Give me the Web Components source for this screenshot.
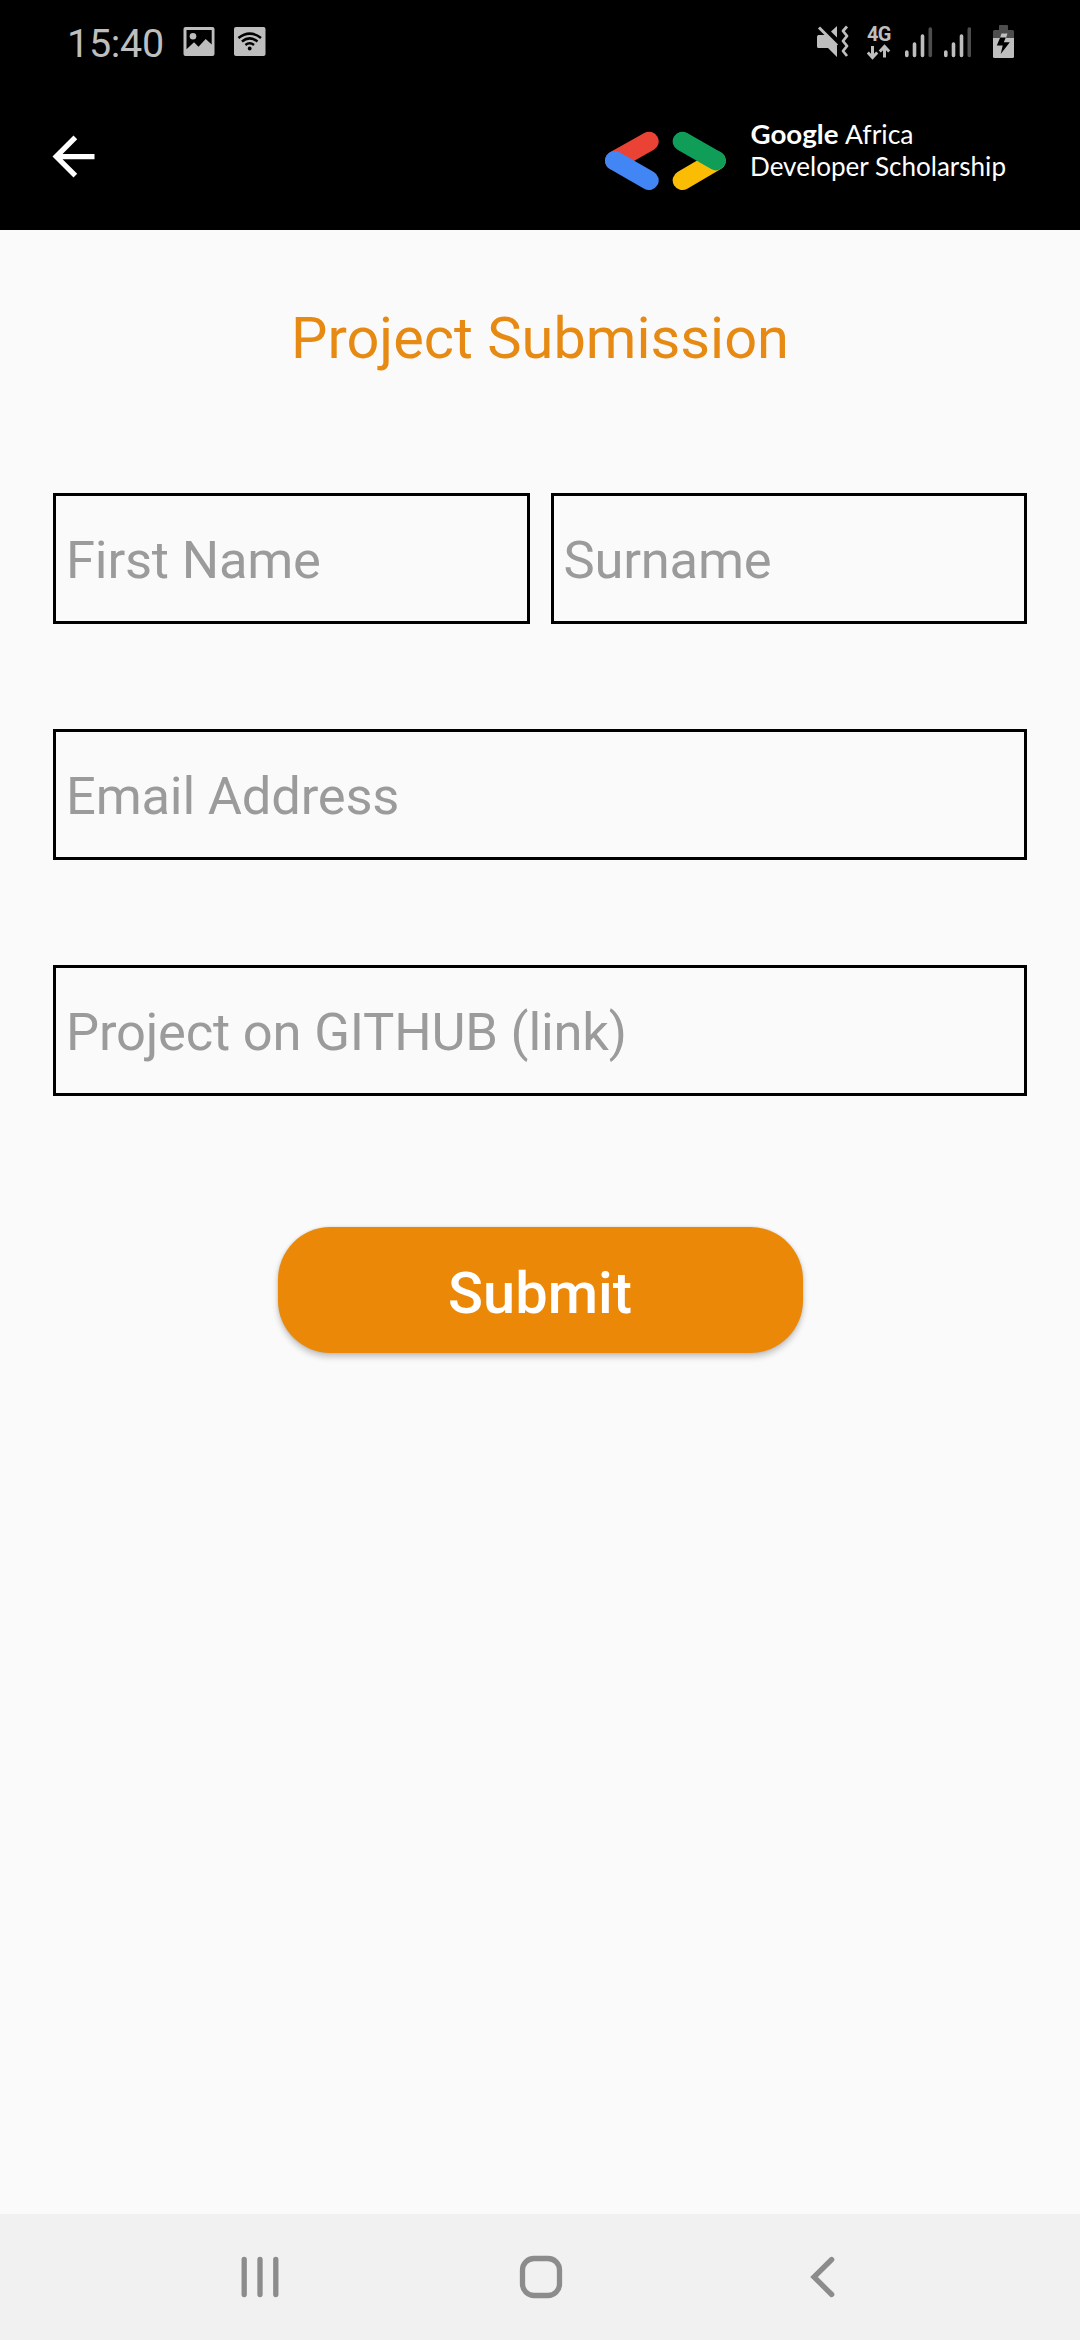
<!DOCTYPE html>
<html lang="en">
<head>
<meta charset="utf-8">
<title>Project Submission</title>
<style>
html,body{margin:0;padding:0;background:#fafafa}
body{font-family:Roboto,"Liberation Sans",sans-serif}
</style>
</head>
<body>
<submission-screen></submission-screen>
<script>
const define = (name, css, html) => customElements.define(name, class extends HTMLElement {
  constructor() {
    super();
    this.attachShadow({ mode: 'open' }).innerHTML =
      `<style>:host{display:block;box-sizing:border-box}*{box-sizing:border-box}svg{display:block;flex:none}${css}</style>${html}`;
  }
});

define('status-bar', `
:host{display:flex;justify-content:space-between;height:84px;padding:0 64px 0 67px;color:#bebebe;background:#000}
.left,.right{display:flex;align-items:flex-start}
.time{font-size:39.5px;line-height:46px;padding-top:21px;width:116px;white-space:nowrap;letter-spacing:-.3px}
.left svg{margin-top:27px}
.right svg{margin-top:24px}
.wifi{margin-left:18.5px}
.net{width:24px;margin-left:18px;padding-top:24px}
.net span{display:block;font-weight:700;font-size:20px;line-height:20px;letter-spacing:-.6px;white-space:nowrap}
.net svg{margin-top:0}
`, `
<div class="left">
  <span class="time">15:40</span>
  <svg width="32" height="29" viewBox="0 0 32 29"><path fill="#bebebe" fill-rule="evenodd" d="M2.500 0h27a2 2 0 0 1 2 2v25a2 2 0 0 1-2 2h-27a2 2 0 0 1-2-2V2a2 2 0 0 1 2-2zM3.500 3v19.200l7.500-7 4.500 4.600 7.200-7.800 6 5.500V3z"/><circle cx="10" cy="9.200" r="3.300" fill="#bebebe"/></svg>
  <svg class="wifi" width="32" height="29" viewBox="0 0 32 29"><rect width="31.500" height="29" rx="2" fill="#bebebe"/><g fill="none" stroke="#000" stroke-width="2.500"><path d="M4.400 11Q15.700 2.200 27 11"/><path d="M7.900 14.500Q15.700 8.300 23.500 14.500"/><path d="M11.400 18Q15.700 14.500 20 18"/></g><circle cx="15.700" cy="21.500" r="1.900" fill="#000"/></svg>
</div>
<div class="right">
  <svg width="32" height="36" viewBox="817 24 32 36"><path fill="#bebebe" d="M818 35h8l11 11v11l-9-9h-9.500a1.500 1.500 0 0 1-1.500-1.500V36.500zM831 31.500l6-5.500v11.500z"/><path d="M819 27.500L837 45.500" stroke="#bebebe" stroke-width="3"/><path d="M847 26.500l-4 4.500 4 5-4 5 4 5-4 5 4 5" fill="none" stroke="#bebebe" stroke-width="2.800" stroke-linejoin="round"/></svg>
  <div class="net"><span>4G</span><svg width="24" height="16" viewBox="867 44 24 16"><path d="M872.500 46v11.500m-4.700-5l4.700 5 4.700-5M884.500 57.500V46.500m-4.700 5l4.700-5 4.700 5" fill="none" stroke="#bebebe" stroke-width="3"/></svg></div>
  <svg width="66" height="36" viewBox="905 24 66 36" style="margin-left:14px"><g stroke="#bebebe" stroke-width="3.600" stroke-linecap="round"><path d="M906.800 52v3.500M914.500 44v11.500M922.500 36v19.500M945.800 52v3.500M953.500 44v11.500M961.500 36v19.500"/><path stroke="#4d4d4d" d="M930.300 29v26.500M969.300 29v26.500"/></g></svg>
  <svg width="24" height="36" viewBox="992 24 24 36" style="margin-left:21px"><path fill="#4d4d4d" d="M1000 25h7a1 1 0 0 1 1 1v4h4.500a1.500 1.500 0 0 1 1.500 1.500V38h-21v-6.500a1.500 1.500 0 0 1 1.500-1.500h4.500v-4a1 1 0 0 1 1-1z"/><path fill="#bebebe" d="M993 38h21v18.500a1.500 1.500 0 0 1-1.500 1.500h-18a1.500 1.500 0 0 1-1.500-1.500z"/><path fill="#bebebe" d="M1001.500 33.500h6L1006 38h-6z"/><path fill="#000" d="M1000.200 37.500h5.600l-2 4.800h6L1000.700 54l2-8.400h-5.900z"/></svg>
</div>`);

define('scholarship-logo', `
:host{display:flex;align-items:flex-start}
`, `
<svg width="122" height="60" viewBox="604 131 122 60"><g fill="none" stroke-width="19.400" stroke-linecap="round"><path stroke="#ea4335" d="M614.700 160.700L649 141.400"/><path stroke="#4285f4" d="M614.700 160.700L649 180.300"/><path stroke="#fbbc04" d="M682.400 180.300L716 160.700"/><path stroke="#0f9d58" d="M682.400 141.400L716 160.700"/></g></svg>
<svg width="262" height="84" viewBox="748 106 262 84" style="margin:-25px 0 0 22px"><g fill="#fff" font-family="Lato, Roboto, sans-serif" font-size="26.500"><text x="750.500" y="144" font-weight="700" textLength="88" lengthAdjust="spacingAndGlyphs">Google</text><text x="845" y="144" textLength="68.500" lengthAdjust="spacingAndGlyphs">Africa</text><text x="750" y="176" textLength="256" lengthAdjust="spacingAndGlyphs">Developer Scholarship</text></g></svg>`);

define('app-bar', `
:host{display:flex;justify-content:space-between;align-items:flex-start;height:146px;padding:41px 70px 0 42px;background:#000}
scholarship-logo{margin-top:6px}
`, `
<svg width="63" height="63" viewBox="0 0 24 24"><path fill="#fff" d="M20 11H7.830l5.590-5.590L12 4l-8 8 8 8 1.410-1.410L7.830 13H20v-2z"/></svg>
<scholarship-logo></scholarship-logo>`);

define('text-field', `
:host{display:flex;align-items:center;height:131px;flex:1;border:3px solid #000;padding:3px 10px 0;font-size:52.5px;line-height:62px;letter-spacing:-.2px;color:#9b9b9b;white-space:nowrap}
`, `<slot></slot>`);

define('submit-button', `
:host{display:flex;align-items:center;justify-content:center;width:525px;height:126px;padding-top:5px;border-radius:52.5px;background:#ec8807;color:#fff;font-weight:500;font-size:57.75px;line-height:68px;box-shadow:0 4px 6px rgba(0,0,0,.22),0 0 3px rgba(0,0,0,.12)}
`, `<slot></slot>`);

define('nav-bar', `
:host{display:flex;align-items:center;justify-content:space-between;height:126px;padding:0 242px 0 238px;background:#f1f1f1}
svg{fill:none;stroke:#8c8c8c;stroke-width:5.3;stroke-linecap:round}
.home{margin-right:8px}
`, `
<svg width="44" height="44" viewBox="238 2255 44 44"><path d="M244.200 2259.500v35M260 2259.500v35M275.800 2259.500v35"/></svg>
<svg class="home" width="44" height="44" viewBox="519 2255 44 44"><rect x="522.500" y="2258.500" width="37" height="37" rx="11.500"/></svg>
<svg width="30" height="44" viewBox="808 2255 30 44"><path d="M831.700 2259.500L814 2277l17.700 17.500" stroke-linejoin="miter"/></svg>`);

define('submission-screen', `
:host{display:flex;flex-direction:column;width:1080px;height:2340px;background:#fafafa}
main{flex:1;display:flex;flex-direction:column;align-items:center;padding:68px 53px 0}
h1{margin:0;font-weight:400;font-size:57.75px;line-height:80px;color:#e78a13;white-space:nowrap}
form{display:flex;flex-direction:column;gap:105px;width:974px;margin-top:115px}
.row{display:flex;gap:21px}
submit-button{margin-top:131px}
`, `
<status-bar></status-bar>
<app-bar></app-bar>
<main>
  <h1>Project Submission</h1>
  <form>
    <div class="row"><text-field>First Name</text-field><text-field>Surname</text-field></div>
    <div class="row"><text-field>Email Address</text-field></div>
    <div class="row"><text-field>Project on GITHUB (link)</text-field></div>
  </form>
  <submit-button>Submit</submit-button>
</main>
<nav-bar></nav-bar>`);
</script>
</body>
</html>
